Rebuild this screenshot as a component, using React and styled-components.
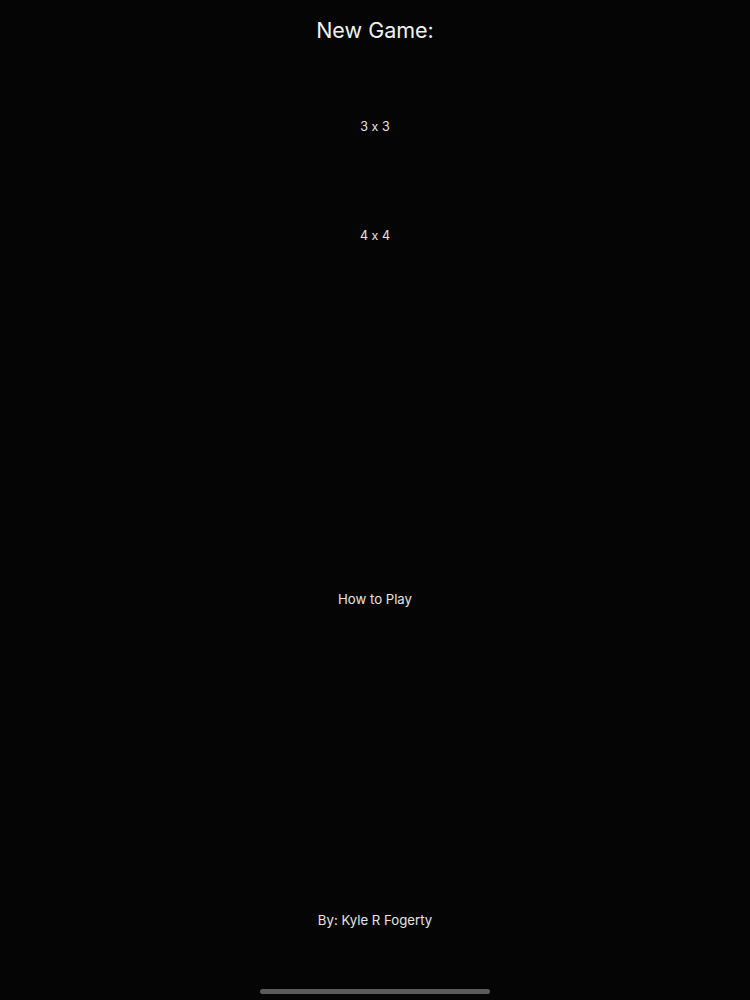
import React from "react";
import styled, { createGlobalStyle } from "styled-components";

const Global = createGlobalStyle`
  html, body { margin: 0; padding: 0; background: #050505; }
  body {
    font-family: Inter, "Noto Sans", "Liberation Sans", sans-serif;
    font-feature-settings: "calt" 0;
  }
`;

const Page = styled.div`
  width: 750px;
  height: 1000px;
  background: #050505;
  display: flex;
  flex-direction: column;
  align-items: center;
  color: #ececec;
  overflow: hidden;
`;

const Title = styled.h1`
  margin: 17px 0 0;
  font-size: 21.5px;
  line-height: 26px;
  font-weight: 400;
  color: #f2f2f2;
`;

const MenuButton = styled.button`
  margin-top: ${(p) => p.$gap}px;
  background: none;
  border: none;
  padding: 0;
  font-family: inherit;
  font-feature-settings: "calt" 0;
  font-size: ${(p) => p.$size}px;
  line-height: ${(p) => p.$line}px;
  color: #e6e6e6;
  cursor: pointer;
`;

const Credit = styled.div`
  margin-top: ${(p) => p.$gap}px;
  font-size: 13.2px;
  line-height: 17px;
  color: #e6e6e6;
`;

const Spacer = styled.div`
  flex: 1;
`;

const HomeIndicator = styled.div`
  width: 230px;
  height: 5px;
  border-radius: 3px;
  background: #5b5b5b;
  margin-bottom: 6px;
`;

export default function App() {
  return (
    <>
      <Global />
      <Page>
        <Title>New Game:</Title>
        <MenuButton $gap={76} $size={12.5} $line={16}>3 x 3</MenuButton>
        <MenuButton $gap={93} $size={12.5} $line={16}>4 x 4</MenuButton>
        <MenuButton $gap={347} $size={13.2} $line={17}>How to Play</MenuButton>
        <Credit $gap={304}>By: Kyle R Fogerty</Credit>
        <Spacer />
        <HomeIndicator />
      </Page>
    </>
  );
}
